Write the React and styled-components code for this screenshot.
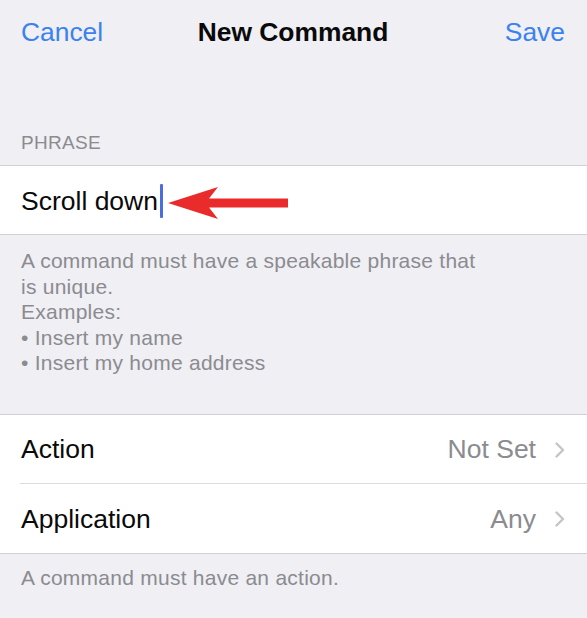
import React from 'react'
import styled, { createGlobalStyle } from 'styled-components'

const GlobalStyle = createGlobalStyle`
  body {
    margin: 0;
    background: #efeff4;
    font-family: 'Liberation Sans', Arial, sans-serif;
    -webkit-font-smoothing: antialiased;
  }
`

const Chevron = () => (
  <svg width="12" height="16" viewBox="0 0 12 16">
    <polyline points="2.5,1.5 9,8 2.5,14.5" fill="none" stroke="#c4c4c9" strokeWidth="2.4" strokeLinecap="round" strokeLinejoin="round" />
  </svg>
)

const Arrow = () => (
  <ArrowMark width="120" height="32" viewBox="0 0 120 32">
    <polygon points="0,16 50,0 41,11.5 120,11.5 120,20.5 41,20.5 50,32" fill="#ea2b2b" />
  </ArrowMark>
)

const App = () => {
  return (
    <Page>
      <GlobalStyle />
      <NavBar>
        <NavButton>Cancel</NavButton>
        <NavTitle>New Command</NavTitle>
        <NavButton $right>Save</NavButton>
      </NavBar>

      <SectionHeader>PHRASE</SectionHeader>
      <Group>
        <PhraseCell>
          <CellLabel>Scroll down</CellLabel>
          <Caret />
          <Arrow />
        </PhraseCell>
      </Group>
      <Footer $bottom={38}>
        A command must have a speakable phrase that<br />
        is unique.<br />
        Examples:<br />
        • Insert my name<br />
        • Insert my home address
      </Footer>

      <Group>
        <Row>
          <CellLabel>Action</CellLabel>
          <Value>Not Set</Value>
          <Chevron />
        </Row>
        <Row $last>
          <CellLabel>Application</CellLabel>
          <Value>Any</Value>
          <Chevron />
        </Row>
      </Group>
      <Footer $top={11} $bottom={30}>
        A command must have an action.
      </Footer>
    </Page>
  )
}

export default App

const Page = styled.div`
  width: 587px;
  min-height: 618px;
  background: #efeff4;
`

const NavBar = styled.header`
  height: 64px;
  padding: 0 22px 0 21px;
  display: grid;
  grid-template-columns: 1fr auto 1fr;
  align-items: center;
`

const NavButton = styled.span`
  font-size: 26.4px;
  color: #3a82f0;
  justify-self: ${props => props.$right ? 'end' : 'start'};
`

const NavTitle = styled.h1`
  margin: 0;
  font-size: 26.4px;
  font-weight: 700;
  color: #0a0a0a;
`

const SectionHeader = styled.div`
  height: 101px;
  box-sizing: border-box;
  padding: 0 21px 11px;
  display: flex;
  align-items: flex-end;
  font-size: 19px;
  line-height: 23px;
  letter-spacing: 0.3px;
  color: #8b8b90;
`

const Group = styled.section`
  background: #fff;
  border-top: 1px solid #cfcfd4;
  border-bottom: 1px solid #cfcfd4;
`

const PhraseCell = styled.div`
  position: relative;
  height: 68px;
  box-sizing: border-box;
  padding: 2px 21px 0;
  display: flex;
  align-items: center;
`

const CellLabel = styled.span`
  font-size: 26.5px;
  color: #0a0a0a;
`

const Caret = styled.span`
  width: 3px;
  height: 34px;
  margin-left: 2px;
  background: #4a6ee0;
  border-radius: 1px;
`

const ArrowMark = styled.svg`
  position: absolute;
  left: 168px;
  top: 21px;
`

const Row = styled.div`
  height: 69px;
  box-sizing: border-box;
  margin-left: 20px;
  padding: 2px 21px 0 0;
  display: flex;
  align-items: center;
  gap: 18px;
  border-bottom: ${props => props.$last ? 'none' : '1px solid #dcdce0'};

  & > ${CellLabel} {
    flex: 1;
    margin-left: 1px;
  }
`

const Value = styled.span`
  font-size: 26.5px;
  color: #8b8b90;
`

const Footer = styled.p`
  margin: 0;
  padding: ${props => props.$top || 13}px 21px ${props => props.$bottom}px;
  font-size: 21px;
  line-height: 25.5px;
  letter-spacing: 0.25px;
  color: #8b8b90;
`
